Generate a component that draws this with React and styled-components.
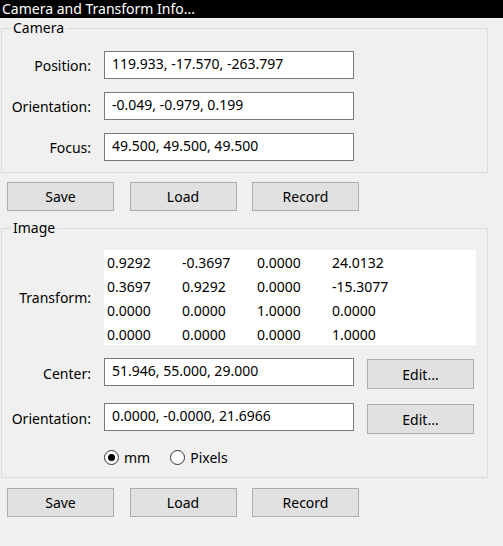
import React from "react";
import styled, { createGlobalStyle } from "styled-components";

const Global = createGlobalStyle`
  html, body { margin: 0; padding: 0; background: #f0f0f0; }
  body { font-family: "Noto Sans", "Segoe UI", sans-serif; font-size: 14px; color: #000; }
  * { box-sizing: border-box; }
`;

const Window = styled.div`
  width: 503px;
  height: 546px;
  background: #f0f0f0;
  overflow: hidden;
`;

const TitleBar = styled.div`
  height: 18px;
  background: #000;
  color: #fff;
  font-size: 14px;
  line-height: 17px;
  padding-left: 2px;
  white-space: nowrap;
`;

const Group = styled.div`
  position: relative;
  margin: ${(p) => p.$top}px 0 0 1px;
  width: 487px;
  border: 1px solid #dcdcdc;
  padding: ${(p) => p.$pt}px 0 ${(p) => p.$pb}px 0;
`;

const Legend = styled.span`
  position: absolute;
  top: -10px;
  left: 9px;
  padding: 0 2px;
  background: #f0f0f0;
  line-height: 18px;
`;

const Form = styled.div`
  display: grid;
  grid-template-columns: 89px 250px 107px;
  column-gap: 13px;
  row-gap: ${(p) => p.$gap}px;
  align-items: center;
`;

const Label = styled.div`
  text-align: right;
  white-space: nowrap;
  margin-top: ${(p) => p.$mt || 0}px;
`;

const Field = styled.div`
  height: 28px;
  border: 1px solid #7a7a7a;
  background: #fff;
  padding-left: 7px;
  line-height: 24px;
  white-space: nowrap;
  align-self: start;
  margin-top: ${(p) => p.$mt || 0}px;
`;

const Matrix = styled.div`
  grid-column: 2 / 4;
  width: 372px;
  height: 95px;
  background: #fff;
  padding: 0 0 0 3px;
  display: grid;
  grid-template-columns: 75px 75px 75px 75px;
  grid-auto-rows: 24px;
  align-items: center;
`;

const Button = styled.button`
  width: 107px;
  height: ${(p) => p.$h || 29}px;
  background: #e1e1e1;
  border: 1px solid #adadad;
  font: inherit;
  color: #000;
  padding: 0;
  margin-top: ${(p) => p.$mt || 0}px;
  align-self: start;
`;

const ButtonRow = styled.div`
  display: flex;
  gap: 15.5px;
  margin: ${(p) => p.$top}px 0 0 7px;
`;

const RadioRow = styled.div`
  grid-column: 2 / 4;
  display: flex;
  align-items: center;
  height: 16px;
  margin-top: ${(p) => p.$mt}px;
`;

const Radio = styled.label`
  display: flex;
  align-items: center;
  gap: 5px;
  margin-right: ${(p) => p.$mr || 0}px;
`;

const Circle = styled.span`
  width: 15px;
  height: 15px;
  border-radius: 50%;
  border: 1px solid #333;
  background: #fff;
  display: flex;
  align-items: center;
  justify-content: center;
  &::after {
    content: "";
    width: 7px;
    height: 7px;
    border-radius: 50%;
    background: ${(p) => (p.$on ? "#000" : "transparent")};
  }
`;

const Spacer = styled.span``;

const matrix = [
  ["0.9292", "-0.3697", "0.0000", "24.0132"],
  ["0.3697", "0.9292", "0.0000", "-15.3077"],
  ["0.0000", "0.0000", "1.0000", "0.0000"],
  ["0.0000", "0.0000", "0.0000", "1.0000"],
];

function Buttons({ top }) {
  return (
    <ButtonRow $top={top}>
      <Button>Save</Button>
      <Button>Load</Button>
      <Button>Record</Button>
    </ButtonRow>
  );
}

export default function App() {
  return (
    <Window>
      <Global />
      <TitleBar>Camera and Transform Info...</TitleBar>
      <Group $top={10} $pt={22} $pb={11}>
        <Legend>Camera</Legend>
        <Form $gap={13}>
          <Label>Position:</Label>
          <Field>119.933, -17.570, -263.797</Field>
          <Spacer />
          <Label>Orientation:</Label>
          <Field>-0.049, -0.979, 0.199</Field>
          <Spacer />
          <Label>Focus:</Label>
          <Field>49.500, 49.500, 49.500</Field>
          <Spacer />
        </Form>
      </Group>
      <Buttons top={9} />
      <Group $top={17} $pt={21} $pb={12}>
        <Legend>Image</Legend>
        <Form $gap={0}>
          <Label>Transform:</Label>
          <Matrix>
            {matrix.flat().map((v, i) => (
              <div key={i}>{v}</div>
            ))}
          </Matrix>
          <Label $mt={13}>Center:</Label>
          <Field $mt={13}>51.946, 55.000, 29.000</Field>
          <Button $h={30} $mt={14}>Edit...</Button>
          <Label $mt={14}>Orientation:</Label>
          <Field $mt={14}>0.0000, -0.0000, 21.6966</Field>
          <Button $h={30} $mt={15}>Edit...</Button>
          <Spacer />
          <RadioRow $mt={15}>
            <Radio $mr={20}>
              <Circle $on />
              mm
            </Radio>
            <Radio>
              <Circle />
              Pixels
            </Radio>
          </RadioRow>
        </Form>
      </Group>
      <Buttons top={10} />
    </Window>
  );
}
